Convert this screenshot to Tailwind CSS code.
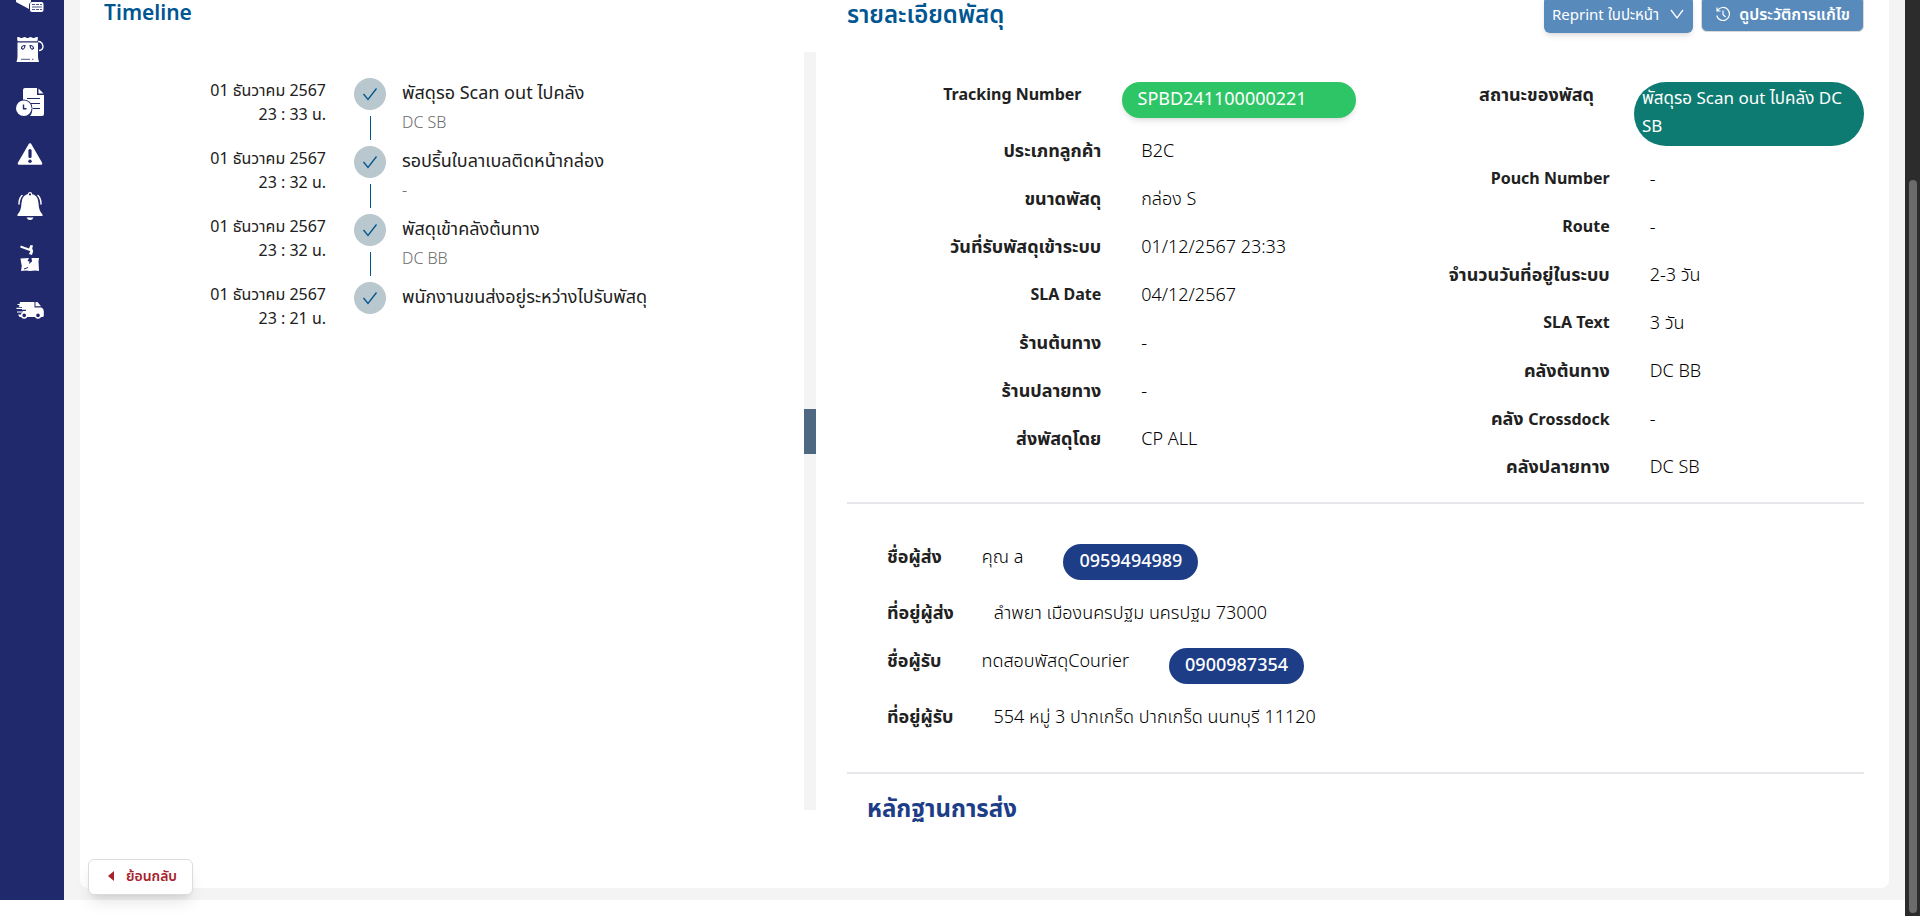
<!DOCTYPE html>
<html lang="th">
<head>
<meta charset="utf-8">
<meta name="viewport" content="width=device-width, initial-scale=1">
<title>รายละเอียดพัสดุ</title>
<script src="https://cdn.jsdelivr.net/npm/@tailwindcss/browser@4"></script>
</head>
<body class="flex h-screen overflow-hidden bg-white font-['Noto_Sans','Noto_Sans_Thai',sans-serif] text-[#212121]">
<div class="relative mb-4 flex min-w-0 flex-1 bg-[#f4f4f4]">
  <nav class="flex w-16 shrink-0 flex-col gap-6 overflow-hidden bg-[#20296b] pl-4 text-white" aria-label="เมนูหลัก">
    <a href="#" class="-mt-4 block size-7" aria-label="รับพัสดุ"><svg class="size-7" viewBox="0 0 28 28" fill="currentColor"><path d="M0 15h15v3q-2 1-2 3v4L0 18z"/><rect x="14" y="18" width="13.500" height="10" rx="2"/><path d="M16 20.500h3m1 0h3m1 0h2M16 23h10M16 25.500h3m1 0h3m1 0h2" stroke="#20296b" stroke-width=".8" fill="none"/></svg></a>
    <a href="#" class="block size-7" aria-label="ถุงพัสดุ"><svg class="size-7" viewBox="0 0 28 28"><path d="M1 1.500q1.500-1 3 0t3 0 3 0 3 0 3 0 3 0 3-.2l-.6 4H1.600z" fill="currentColor"/><path d="M1.500 6.500h20.500v14q0 2 1 5.500H.5q1-3.500 1-5.500z" fill="currentColor"/><path d="M22 5.500q4.500 0 5 5 0 3.500-4 4" fill="none" stroke="currentColor" stroke-width="1.400"/><path d="M5.500 12.500q0-3 3.500-3 0 3-2 3.800zM17.500 12.500q0-3-3.500-3 0 3 2 3.800z" fill="none" stroke="#20296b" stroke-width="1.100"/><path d="M5 23.300h9M16 23.300h1.500" stroke="#20296b" stroke-width=".8"/></svg></a>
    <a href="#" class="block size-7" aria-label="ประวัติรายการ"><svg class="size-7" viewBox="0 0 28 28"><path d="M9 0h12v7h7v19q0 2-2 2H14a9.500 9.500 0 0 0-7-15.500V2q0-2 2-2z" fill="currentColor"/><path d="M22.500.5 27.500 5.500h-5z" fill="currentColor"/><path d="M11 10.500h13M15 15.500h9M17 20.500h7" stroke="#20296b" stroke-width="1.200"/><circle cx="7.800" cy="20.200" r="8.600" fill="#20296b"/><circle cx="7.800" cy="20.200" r="7.800" fill="currentColor"/><path d="M7.500 16.500v4.300h3" fill="none" stroke="#20296b" stroke-width="1.400"/></svg></a>
    <a href="#" class="block size-7" aria-label="แจ้งเตือนปัญหา"><svg class="size-7" viewBox="0 0 28 28"><path d="M14 4.500 25 23.500H3z" fill="currentColor" stroke="currentColor" stroke-width="2.600" stroke-linejoin="round"/><path d="M14 10.500v6" stroke="#20296b" stroke-width="3.200" stroke-linecap="round"/><circle cx="14" cy="21.300" r="1.700" fill="#20296b"/></svg></a>
    <a href="#" class="block size-7" aria-label="การแจ้งเตือน"><svg class="size-7" viewBox="0 0 28 28"><path d="M14 2q8 0 8.500 9 .3 8 4 11.500V24h-25v-1.500Q5.200 19 5.500 11 6 2 14 2z" fill="currentColor"/><circle cx="14" cy="2.400" r="1.700" fill="#20296b" stroke="currentColor" stroke-width="1.200"/><path d="M10.500 25.500h7q-1 2.500-3.500 2.500t-3.500-2.500z" fill="currentColor"/><path d="M6 3.500Q3 6.500 3 12M22 3.500q3 3 3 8.500" fill="none" stroke="currentColor" stroke-width="1.500" stroke-linecap="round"/></svg></a>
    <a href="#" class="block size-7" aria-label="พัสดุเสียหาย"><svg class="size-7" viewBox="0 0 28 28"><path d="M4.500 2.500 14 6" stroke="currentColor" stroke-width="1.900"/><path d="m12.500 5.500 2-4.500 2.500.5-.8 3 1 2.500-1.200 4-3-1 1.300-3z" fill="currentColor"/><path d="M4.500 14.500 13 14l-1.500 3 2 .5-.5 2.500 3-2.500-.5-3.500h7.500l-.5 3.500.5 9.500-4-.5-5 .5-4-.5-5 .5.800-5-.8-4z" fill="currentColor"/><path d="m8 25 4-1.500" stroke="#20296b"/></svg></a>
    <a href="#" class="block size-7" aria-label="รถขนส่ง"><svg class="size-7" viewBox="0 0 28 28"><path d="M4 6h14.500v5.500H25q2.500.5 2.800 4v4q0 1.500-1.500 1.500H3.500l-1.500-2.500h6v-1.500H7V15h3v-1.300H6V11H3z" fill="currentColor"/><path d="M19.500 6h2l3.500 4.300h-5.500z" fill="currentColor"/><path d="M1.500 8.500H5M.5 12.300h8M1 16h7" stroke="currentColor" stroke-width="1.200"/><circle cx="8.200" cy="19.300" r="2.600" fill="#20296b" stroke="currentColor" stroke-width="1.500"/><circle cx="22" cy="19.300" r="2.600" fill="#20296b" stroke="currentColor" stroke-width="1.500"/></svg></a>
  </nav>

  <main class="mx-4 mb-3 grid min-w-0 flex-1 grid-cols-[724fr_12px_1073fr] overflow-hidden rounded-b-lg bg-white">
    <section class="min-w-0">
      <h2 class="h-[52px] pl-6 text-[21px]/6 font-semibold text-[#005691]">Timeline</h2>
      <ol class="pt-[26px]">
        <li class="flex h-[68px]">
          <div class="w-[246px] shrink-0 text-right text-base/6">01 ธันวาคม 2567<br>23 : 33 น.</div>
          <div class="ml-7 flex w-8 flex-col items-center gap-1.5"><span class="flex size-8 items-center justify-center rounded-full bg-[#b9c7ce]"><svg class="size-4" viewBox="0 0 16 16" fill="none" stroke="#005691" stroke-width="1.300"><path d="m1.500 8 4.500 5.500L14.500 2.500"/></svg></span><span class="h-6 w-px bg-[#005691]"></span></div>
          <div class="pl-4"><p class="text-lg/7">พัสดุรอ Scan out ไปคลัง</p><p class="text-base/8 font-light text-[#6b6b6b]">DC SB</p></div>
        </li>
        <li class="flex h-[68px]">
          <div class="w-[246px] shrink-0 text-right text-base/6">01 ธันวาคม 2567<br>23 : 32 น.</div>
          <div class="ml-7 flex w-8 flex-col items-center gap-1.5"><span class="flex size-8 items-center justify-center rounded-full bg-[#b9c7ce]"><svg class="size-4" viewBox="0 0 16 16" fill="none" stroke="#005691" stroke-width="1.300"><path d="m1.500 8 4.500 5.500L14.500 2.500"/></svg></span><span class="h-6 w-px bg-[#005691]"></span></div>
          <div class="pl-4"><p class="text-lg/7">รอปริ้นใบลาเบลติดหน้ากล่อง</p><p class="text-base/8 font-light text-[#6b6b6b]">-</p></div>
        </li>
        <li class="flex h-[68px]">
          <div class="w-[246px] shrink-0 text-right text-base/6">01 ธันวาคม 2567<br>23 : 32 น.</div>
          <div class="ml-7 flex w-8 flex-col items-center gap-1.5"><span class="flex size-8 items-center justify-center rounded-full bg-[#b9c7ce]"><svg class="size-4" viewBox="0 0 16 16" fill="none" stroke="#005691" stroke-width="1.300"><path d="m1.500 8 4.500 5.500L14.500 2.500"/></svg></span><span class="h-6 w-px bg-[#005691]"></span></div>
          <div class="pl-4"><p class="text-lg/7">พัสดุเข้าคลังต้นทาง</p><p class="text-base/8 font-light text-[#6b6b6b]">DC BB</p></div>
        </li>
        <li class="flex h-[68px]">
          <div class="w-[246px] shrink-0 text-right text-base/6">01 ธันวาคม 2567<br>23 : 21 น.</div>
          <div class="ml-7 flex w-8 flex-col items-center"><span class="flex size-8 items-center justify-center rounded-full bg-[#b9c7ce]"><svg class="size-4" viewBox="0 0 16 16" fill="none" stroke="#005691" stroke-width="1.300"><path d="m1.500 8 4.500 5.500L14.500 2.500"/></svg></span></div>
          <div class="pl-4"><p class="text-lg/7">พนักงานขนส่งอยู่ระหว่างไปรับพัสดุ</p></div>
        </li>
      </ol>
    </section>

    <div class="mt-[52px] mb-[78px] flex items-center bg-[#f4f4f4]" role="separator" aria-orientation="vertical"><span class="h-[45px] w-full bg-[#4f6881]"></span></div>

    <section class="min-w-0 pr-[25px] pl-[31px]">
      <div class="-mt-1 flex h-14 items-start gap-2">
        <h2 class="mr-auto text-2xl/9 font-semibold text-[#005691]">รายละเอียดพัสดุ</h2>
        <button type="button" class="flex h-[37px] w-[149px] items-center justify-between rounded-md bg-[#588abb] px-2 text-[15px] text-white shadow-md">Reprint ใบปะหน้า<svg class="size-4" viewBox="0 0 16 16" fill="none" stroke="currentColor" stroke-width="1.300"><path d="m2 3 6 8 6-8"/></svg></button>
        <button type="button" class="flex h-9 w-[163px] items-center justify-center gap-2 rounded-md border border-[#d9d9d9] bg-[#588abb] text-base font-semibold text-white"><svg class="size-4" viewBox="0 0 16 16" fill="none" stroke="currentColor" stroke-width="1.200"><path d="M2.500 4.500a6.500 6.500 0 1 1-.8 5M2 1.500v3.500h3.500M8 4.500V8.500l2.500 2.500"/></svg>ดูประวัติการแก้ไข</button>
      </div>
      <div class="grid grid-cols-2 pt-[30px] text-lg/6">
        <dl class="space-y-5">
          <div class="flex gap-10"><dt class="flex-1 text-right text-base/6 font-bold">Tracking Number</dt><dd class="w-[234px] rounded-full bg-[#2ec566] px-4 pt-0.5 pb-1.5 leading-7 text-white shadow-md">SPBD241100000221</dd></div>
          <div class="flex gap-10 pb-1"><dt class="w-1/2 shrink-0 text-right font-bold">ประเภทลูกค้า</dt><dd class="font-light text-black">B2C</dd></div>
          <div class="flex gap-10 pb-1"><dt class="w-1/2 shrink-0 text-right font-bold">ขนาดพัสดุ</dt><dd class="font-light text-black">กล่อง S</dd></div>
          <div class="flex gap-10 pb-1"><dt class="w-1/2 shrink-0 text-right font-bold">วันที่รับพัสดุเข้าระบบ</dt><dd class="font-light text-black">01/12/2567 23:33</dd></div>
          <div class="flex gap-10 pb-1"><dt class="w-1/2 shrink-0 text-right text-base/6 font-bold">SLA Date</dt><dd class="font-light text-black">04/12/2567</dd></div>
          <div class="flex gap-10 pb-1"><dt class="w-1/2 shrink-0 text-right font-bold">ร้านต้นทาง</dt><dd class="font-light text-black">-</dd></div>
          <div class="flex gap-10 pb-1"><dt class="w-1/2 shrink-0 text-right font-bold">ร้านปลายทาง</dt><dd class="font-light text-black">-</dd></div>
          <div class="flex gap-10 pb-1"><dt class="w-1/2 shrink-0 text-right font-bold">ส่งพัสดุโดย</dt><dd class="font-light text-black">CP ALL</dd></div>
        </dl>
        <dl class="space-y-5">
          <div class="flex gap-10"><dt class="flex-1 text-right font-bold">สถานะของพัสดุ</dt><dd class="w-[230px] rounded-[32px] bg-[#0e7b72] px-2 pt-0.5 pb-1.5 text-[17px]/7 text-white">พัสดุรอ Scan out ไปคลัง DC SB</dd></div>
          <div class="flex gap-10 pb-1"><dt class="w-1/2 shrink-0 text-right text-base/6 font-bold">Pouch Number</dt><dd class="font-light text-black">-</dd></div>
          <div class="flex gap-10 pb-1"><dt class="w-1/2 shrink-0 text-right text-base/6 font-bold">Route</dt><dd class="font-light text-black">-</dd></div>
          <div class="flex gap-10 pb-1"><dt class="w-1/2 shrink-0 text-right font-bold">จำนวนวันที่อยู่ในระบบ</dt><dd class="font-light text-black">2-3 วัน</dd></div>
          <div class="flex gap-10 pb-1"><dt class="w-1/2 shrink-0 text-right text-base/6 font-bold">SLA Text</dt><dd class="font-light text-black">3 วัน</dd></div>
          <div class="flex gap-10 pb-1"><dt class="w-1/2 shrink-0 text-right font-bold">คลังต้นทาง</dt><dd class="font-light text-black">DC BB</dd></div>
          <div class="flex gap-10 pb-1"><dt class="w-1/2 shrink-0 text-right font-bold">คลัง <span class="text-base/5">Crossdock</span></dt><dd class="font-light text-black">-</dd></div>
          <div class="flex gap-10 pb-1"><dt class="w-1/2 shrink-0 text-right font-bold">คลังปลายทาง</dt><dd class="font-light text-black">DC SB</dd></div>
        </dl>
      </div>
      <dl class="mt-5 space-y-5 border-y-2 border-[#e5e7eb] p-10 text-lg/6">
        <div class="flex gap-10"><dt class="font-bold">ชื่อผู้ส่ง</dt><dd class="font-light text-black">คุณ a</dd><dd class="rounded-full bg-[#1d3d86] px-4 pt-0.5 pb-1.5 leading-7 font-medium text-white">0959494989</dd></div>
        <div class="flex gap-10 pb-1"><dt class="font-bold">ที่อยู่ผู้ส่ง</dt><dd class="font-light text-black">ลำพยา เมืองนครปฐม นครปฐม 73000</dd></div>
        <div class="flex gap-10"><dt class="font-bold">ชื่อผู้รับ</dt><dd class="font-light text-black">ทดสอบพัสดุCourier</dd><dd class="rounded-full bg-[#1d3d86] px-4 pt-0.5 pb-1.5 leading-7 font-medium text-white">0900987354</dd></div>
        <div class="flex gap-10 pb-1"><dt class="font-bold">ที่อยู่ผู้รับ</dt><dd class="font-light text-black">554 หมู่ 3 ปากเกร็ด ปากเกร็ด นนทบุรี 11120</dd></div>
      </dl>
      <h2 class="pt-3.5 pl-5 text-2xl/10 font-bold text-[#1d3d86]">หลักฐานการส่ง</h2>
    </section>
  </main>

  <button type="button" class="absolute bottom-[5px] left-[88px] flex h-9 w-[105px] items-center justify-center gap-3 rounded-md border border-[#dcdcdc] bg-white pb-0.5 pl-1 text-sm font-semibold text-[#a9222c] shadow-lg"><svg class="h-2.5 w-1.5" viewBox="0 0 6 10" fill="currentColor"><path d="M6 0v10L0 5z"/></svg>ย้อนกลับ</button>
</div>
<div class="flex w-[15px] shrink-0 justify-center bg-[#2c2c2c] pt-[180px] pb-[3px]" aria-hidden="true"><span class="w-2 rounded-full bg-[#6b6b6b]"></span></div>
</body>
</html>
